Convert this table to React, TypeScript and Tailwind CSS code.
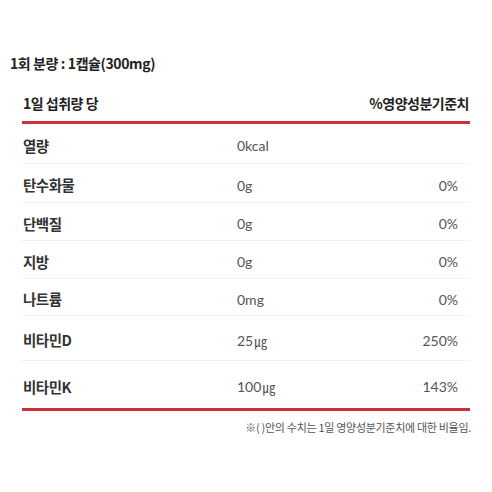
const rows = [
  { name: '열량', amount: '0kcal', unit: '', pct: '', h: 'h-[40px]' },
  { name: '탄수화물', amount: '0g', unit: '', pct: '0%', h: 'h-[39px]' },
  { name: '단백질', amount: '0g', unit: '', pct: '0%', h: 'h-[38px]' },
  { name: '지방', amount: '0g', unit: '', pct: '0%', h: 'h-[38px]' },
  { name: '나트륨', amount: '0mg', unit: '', pct: '0%', h: 'h-[37px]' },
  { name: '비타민D', amount: '25', unit: '㎍', pct: '250%', h: 'h-[45px]' },
  { name: '비타민K', amount: '100', unit: '㎍', pct: '143%', h: 'h-[47px]' },
]

const App = () => {
  return (
    <div className="h-[492px] w-[492px] overflow-hidden bg-white font-['Noto_Sans_CJK_KR',sans-serif] text-[#333]">
      <div className="pl-[10px] pt-[54px] text-[14px] font-bold leading-[18px] tracking-[-0.4px] text-[#222]">
        1회 분량 : 1캡슐(300mg)
      </div>

      <div className="mx-[22px] mt-[13px]">
        <div className="flex h-[36px] items-center justify-between pl-[1px] pr-[1px] text-[14px] font-bold tracking-[-0.5px] text-[#222]">
          <span>1일 섭취량 당</span>
          <span>%영양성분기준치</span>
        </div>
        <div className="h-[3px] bg-[#c8323b]"></div>

        {rows.map((row, i) => (
          <div
            key={row.name}
            className={`flex items-center pt-[4px] ${row.h} ${i < rows.length - 1 ? 'border-b border-[#f2f2f2]' : ''}`}
          >
            <span className="w-[215px] pl-[1px] text-[14.5px] font-bold tracking-[-0.5px] text-[#333]">{row.name}</span>
            <span className="flex-1 font-['Lato','Noto_Sans_CJK_KR',sans-serif] text-[14px] text-[#555]">
              {row.amount}
              {row.unit ? (
                <span className="ml-[1px] font-['Noto_Sans_CJK_KR',sans-serif] text-[13px]">{row.unit}</span>
              ) : null}
            </span>
            <span className="pr-[12px] font-['Lato','Noto_Sans_CJK_KR',sans-serif] text-[14px] text-[#555]">{row.pct}</span>
          </div>
        ))}

        <div className="h-[3px] bg-[#c8323b]"></div>
      </div>

      <p className="mt-[8px] pr-[21px] text-right text-[11px] tracking-[-0.3px] text-[#555]">
        ※( )안의 수치는 1일 영양성분기준치에 대한 비율임.
      </p>
    </div>
  )
}

export default App
